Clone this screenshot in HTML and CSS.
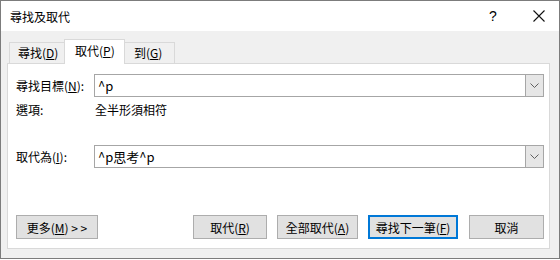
FILE: index.html
```html
<!DOCTYPE html>
<html lang="zh-Hant">
<head>
    <meta charset="UTF-8">
    <title>尋找及取代</title>
    <link rel="stylesheet" href="styles.css">
</head>
<body>

    <!-- Fenêtre de dialogue -->
    <div class="window">
        <div class="titlebar">
            <span class="title">尋找及取代</span>
            <span class="help">?</span>
            <span class="close">
                <svg width="12" height="12" viewBox="0 0 12 12"><path d="M0.5 0.5L11.5 11.5M11.5 0.5L0.5 11.5" stroke="#111" stroke-width="1.1"/></svg>
            </span>
        </div>

        <div class="client">
            <!-- Onglets -->
            <div class="tabs">
                <div class="tab tab-find">尋找(<u>D</u>)</div>
                <div class="tab tab-active">取代(<u>P</u>)</div>
                <div class="tab tab-goto">到(<u>G</u>)</div>
            </div>

            <div class="panel">
                <div class="row row-find">
                    <label class="label">尋找目標(<u>N</u>):</label>
                    <div class="combo">
                        <span class="value">^p</span>
                        <span class="drop"><svg width="9" height="5" viewBox="0 0 9 5"><path d="M0.5 0.5L4.5 4.5L8.5 0.5" fill="none" stroke="#606060" stroke-width="1"/></svg></span>
                    </div>
                </div>
                <div class="row row-options">
                    <span class="label">選項:</span>
                    <span class="option">全半形須相符</span>
                </div>
                <div class="row row-replace">
                    <label class="label">取代為(<u>I</u>):</label>
                    <div class="combo">
                        <span class="value">^p思考^p</span>
                        <span class="drop"><svg width="9" height="5" viewBox="0 0 9 5"><path d="M0.5 0.5L4.5 4.5L8.5 0.5" fill="none" stroke="#606060" stroke-width="1"/></svg></span>
                    </div>
                </div>

                <!-- Boutons -->
                <div class="buttons">
                    <button class="btn btn-more">更多(<u>M</u>) &gt; &gt;</button>
                    <span class="spacer"></span>
                    <button class="btn btn-replace">取代(<u>R</u>)</button>
                    <button class="btn btn-all">全部取代(<u>A</u>)</button>
                    <button class="btn btn-next">尋找下一筆(<u>F</u>)</button>
                    <button class="btn btn-cancel">取消</button>
                </div>
            </div>
        </div>
    </div>

</body>
</html>
```

FILE: styles.css
```css
/* Page */
body {
    margin: 0;
    background: #ffffff;
    font-family: "Noto Sans CJK TC", "Noto Sans", sans-serif;
    font-size: 12px;
    color: #000;
}

u {
    text-decoration: underline;
    text-underline-offset: 1px;
}

/* Fenêtre */
.window {
    width: 560px;
    height: 259px;
    box-sizing: border-box;
    border: 1px solid #7c7c7c;
    display: flex;
    flex-direction: column;
}

.titlebar {
    height: 30px;
    background: #fff;
    display: flex;
    align-items: center;
    flex-shrink: 0;
}

.title {
    margin-left: 9px;
    flex: 1;
}

.help {
    width: 14px;
    font-family: "Liberation Sans", sans-serif;
    font-size: 14px;
    margin-right: 30px;
}

.close {
    display: flex;
    margin-right: 14px;
}

.client {
    flex: 1;
    background: #f0f0f0;
    padding: 8px 9px 9px 6px;
    display: flex;
    flex-direction: column;
}

/* Onglets */
.tabs {
    display: flex;
    align-items: flex-end;
    height: 24px;
    padding-left: 2px;
}

.tab {
    height: 21px;
    box-sizing: border-box;
    border: 1px solid #d9d9d9;
    border-bottom: none;
    background: #f0f0f0;
    display: flex;
    align-items: center;
    line-height: 1;
}

.tab-find {
    width: 55px;
    padding-left: 8px;
    border-right: none;
}

.tab-active {
    width: 61px;
    height: 25px;
    background: #fff;
    padding-left: 10px;
    margin-bottom: -1px;
    position: relative;
    z-index: 1;
    padding-bottom: 2px;
}

.tab-goto {
    width: 50px;
    padding-left: 9px;
    border-left: none;
}

.panel {
    flex: 1;
    background: #fff;
    border: 1px solid #d9d9d9;
    padding: 10px 5px 9px 8px;
    display: flex;
    flex-direction: column;
}

/* Lignes */
.row {
    display: flex;
    align-items: center;
}

.label {
    width: 78px;
    flex-shrink: 0;
}

.combo {
    flex: 1;
    height: 23px;
    box-sizing: border-box;
    border: 1px solid #a6a6a6;
    display: flex;
    align-items: stretch;
    font-size: 13px;
}

.value {
    flex: 1;
    padding-left: 3px;
    display: flex;
    align-items: center;
}

.drop {
    width: 17px;
    background: #e6e6e6;
    border-left: 1px solid #a6a6a6;
    display: flex;
    align-items: center;
    justify-content: center;
}

.row-options {
    margin-top: 4px;
}

.option {
    margin-left: 1px;
}

.row-replace {
    margin-top: 27px;
}

/* Boutons */
.buttons {
    margin-top: auto;
    display: flex;
}

.spacer {
    flex: 1;
}

.btn {
    height: 24px;
    box-sizing: border-box;
    border: 1px solid #adadad;
    background: #e1e1e1;
    font-family: inherit;
    font-size: 12px;
    padding: 0;
    margin: 0;
    color: #000;
}

.btn-more {
    width: 82px;
}

.btn-replace {
    width: 74px;
}

.btn-all {
    width: 81px;
    margin-left: 10px;
}

.btn-next {
    width: 90px;
    margin-left: 10px;
    border: 2px solid #0078d7;
}

.btn-cancel {
    width: 75px;
    margin-left: 11px;
}
```
